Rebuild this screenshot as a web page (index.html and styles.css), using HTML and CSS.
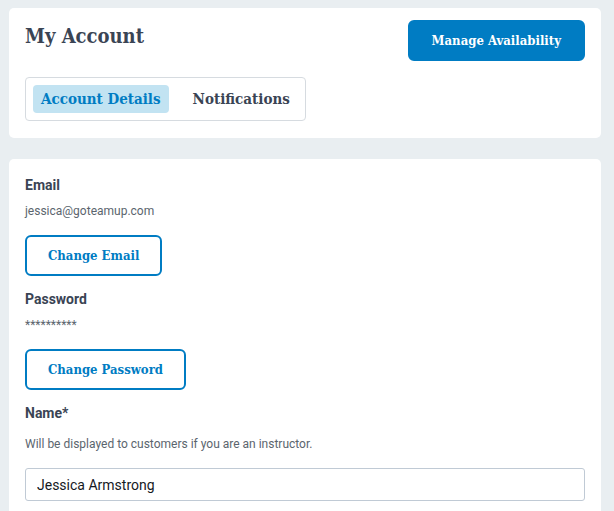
FILE: index.html
```html
<!DOCTYPE html>
<html lang="en">
<head>
  <meta charset="UTF-8">
  <meta name="viewport" content="width=device-width, initial-scale=1.0">
  <title>My Account</title>
  <link rel="stylesheet" href="styles.css">
</head>
<body>
  <header class="card">
    <div class="header-row">
      <h1>My Account</h1>
      <button type="button" class="btn btn-primary">Manage Availability</button>
    </div>
    <nav class="tabs">
      <a href="#details" class="tab active">Account Details</a>
      <a href="#notifications" class="tab">Notifications</a>
    </nav>
  </header>

  <main class="card details" id="details">
    <form>
      <section class="field">
        <h2 class="label">Email</h2>
        <p class="value">jessica@goteamup.com</p>
        <button type="button" class="btn btn-outline">Change Email</button>
      </section>

      <section class="field">
        <h2 class="label">Password</h2>
        <p class="value">**********</p>
        <button type="button" class="btn btn-outline">Change Password</button>
      </section>

      <div class="field">
        <label for="name" class="label">Name*</label>
        <p class="help" id="nameHelp">Will be displayed to customers if you are an instructor.</p>
        <input type="text" id="name" value="Jessica Armstrong" aria-describedby="nameHelp" required>
      </div>
    </form>
  </main>
</body>
</html>
```

FILE: styles.css
```css
* {
  box-sizing: border-box;
}
body {
  margin: 0;
  padding: 8px 13px 0 9px;
  background: #e9eef1;
  color: #3a4454;
  font-family: Roboto, "Liberation Sans", sans-serif;
  font-size: 14px;
}
h1, h2, p {
  margin: 0;
}
h1, .btn, .tab {
  font-family: "Roboto Slab", "DejaVu Serif Condensed", "DejaVu Serif", serif;
  font-weight: bold;
}
.card {
  background: white;
  border-radius: 5px;
  padding: 12px 16px 17px;
}
.header-row {
  display: flex;
  justify-content: space-between;
  align-items: flex-start;
  margin-bottom: 16px;
}
h1 {
  font-size: 20px;
  line-height: 32px;
}
.btn {
  height: 41px;
  border: 2px solid #007cc3;
  border-radius: 6px;
  font-size: 13px;
  cursor: pointer;
}
.btn-primary {
  padding: 0 22px;
  background: #007cc3;
  color: white;
}
.btn-outline {
  padding: 0 21px;
  background: white;
  color: #007cc3;
}
.tabs {
  display: inline-flex;
  gap: 16px;
  padding: 7px;
  border: 1px solid #d6dbe0;
  border-radius: 4px;
}
.tab {
  padding: 0 8px;
  border-radius: 4px;
  color: #3a4454;
  font-size: 15px;
  line-height: 28px;
  text-decoration: none;
}
.tab.active {
  background: #c2e3f2;
  color: #007cc3;
}
.details {
  margin-top: 21px;
  padding: 16px;
  border-radius: 5px 5px 0 0;
}
.field {
  margin-bottom: 13px;
}
.field:last-child {
  margin-bottom: 0;
}
.label {
  display: block;
  font-size: 14px;
  font-weight: bold;
  line-height: 20px;
}
.value, .help {
  color: #5b656e;
  font-size: 12px;
  line-height: 16px;
}
.value {
  margin: 8px 0 16px;
}
.help {
  margin: 13px 0 16px;
}
input {
  display: block;
  width: 100%;
  height: 33px;
  padding: 0 11px;
  border: 1px solid #c0cad5;
  border-radius: 3px;
  background: white;
  color: #15191e;
  font-family: inherit;
  font-size: 14px;
}
```
